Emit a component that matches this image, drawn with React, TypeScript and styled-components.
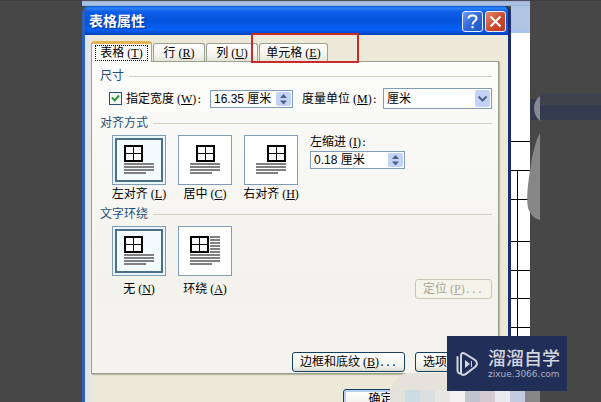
import React from "react";
import styled, { createGlobalStyle, css } from "styled-components";

const Global = createGlobalStyle`
  *, *::before, *::after { box-sizing: border-box; }
  body { margin: 0; background: #474747; }
  body, button, input, select {
    font-family: "Liberation Sans", "Noto Sans CJK SC", sans-serif;
    font-size: 12px;
    line-height: 14px;
    color: #000;
  }
`;

const Page = styled.div`
  position: relative;
  display: grid;
  grid-template-columns: 82px minmax(0, 1fr) 71px;
  height: 100vh;
  overflow: hidden;
`;

const Side = styled.div`
  background: #474747;
  border-top: 1px solid #3d3e41;
`;

const SideShapes = styled.svg`
  position: absolute;
  top: 80px;
  right: 0;
  width: 76px;
  height: 180px;
`;

const Screen = styled.div`
  display: grid;
  grid-template-columns: minmax(0, 1fr) 19px;
  grid-template-rows: 6px minmax(0, 1fr);
`;

const TopStrip = styled.div`
  grid-column: 1 / -1;
  border-top: 1px solid #4c5263;
  background: linear-gradient(#9db2d0, #b4c8e6 60%, #88aee0);
`;

const Dialog = styled.section`
  display: flex;
  flex-direction: column;
  border: solid;
  border-width: 0 3px 0 3px;
  border-color: #0a3fc0 #1c2b74 #0a3fc0 #2c5fb8;
  border-radius: 7px 7px 0 0;
  background: #2c5fb8;
  overflow: hidden;
`;

const TitleBar = styled.header`
  display: flex;
  align-items: center;
  gap: 2px;
  height: 29px;
  margin: 0 -3px;
  padding: 1px 5px 0 7px;
  flex: none;
  background: linear-gradient(#0a4fd0 0, #2f83f5 2px, #0c5ce6 6px, #0454dc 15px, #0760f6 24px, #0552de 26px, #0340b8 29px);
`;

const Title = styled.h1`
  flex: 1;
  margin: 0;
  font-size: 14px;
  line-height: 20px;
  font-weight: 700;
  color: #fff;
  text-shadow: 1px 1px 1px #08308c;
`;

const TitleButton = styled.button<{ $tone: "blue" | "red" }>`
  display: grid;
  place-items: center;
  width: 21px;
  height: 21px;
  padding: 0;
  border: 1px solid #e8effc;
  border-radius: 3px;
  background: ${(p) =>
    p.$tone === "red"
      ? "linear-gradient(135deg, #e5896f, #cc4a2c 55%, #b83a20)"
      : "linear-gradient(135deg, #6a9af0, #2f66d8 55%, #2256c4)"};
`;

const DialogBody = styled.div`
  flex: 1;
  padding: 6px 9px 0 6px;
  background: linear-gradient(90deg, #dbe5f4 0, #e9e7dc 6px, #ece9d8 20px);
`;

const Tabs = styled.div`
  display: flex;
  align-items: flex-end;
  gap: 1px;
  height: 20px;
`;

const TabSlot = styled.div`
  position: relative;
`;

const Tab = styled.button<{ $active?: boolean; $width: number }>`
  display: block;
  width: ${(p) => p.$width}px;
  height: 18px;
  padding: 1px 0 0;
  border: 1px solid #9da394;
  border-bottom: 0;
  border-radius: 3px 3px 0 0;
  background: linear-gradient(#fff, #f3f2ea 70%, #e6e4d8);
  white-space: nowrap;
  ${(p) =>
    p.$active &&
    css`
      position: relative;
      height: 21px;
      margin-bottom: -1px;
      padding: 0 3px;
      border-top: 3px solid #e3b458;
      background: #fcfcfb;
    `}
`;

const FocusRing = styled.span`
  display: block;
  border: 1px dotted #000;
`;

const Highlight = styled.div`
  position: absolute;
  top: -10px;
  left: -8px;
  width: 108px;
  height: 30px;
  border: 2px solid #c62a2a;
  pointer-events: none;
`;

const Pane = styled.div`
  display: flex;
  flex-direction: column;
  padding: 7px 6px 1px 8px;
  border: 1px solid #98a08c;
  box-shadow: 1px 1px 1px #bdbaa8;
  background: linear-gradient(#fcfcfb, #f3f2ed 70%, #f4f3ee);
`;

const Group = styled.fieldset`
  min-width: 0;
  margin: 0 0 6px;
  padding: 0;
  border: 0;
`;

const Legend = styled.legend`
  display: flex;
  align-items: center;
  gap: 5px;
  width: 100%;
  margin-bottom: 5px;
  padding: 0;
  color: #1f4f7c;
  &::after {
    content: "";
    flex: 1;
    height: 1px;
    background: #d0cfc2;
  }
`;

const SizeRow = styled.div`
  display: grid;
  grid-template-columns: 92px 83px 72px minmax(0, 1fr);
  align-items: center;
  gap: 9px;
  padding: 0 0 1px 9px;
`;

const Key = styled.span`
  margin-left: 3px;
  font-family: "Liberation Serif", serif;
  font-size: 12px;
  line-height: 12px;
`;

const Tail = styled.span`
  font-family: "DejaVu Sans Mono", monospace;
  font-size: 10px;
  line-height: 12px;
`;

const CheckLabel = styled.label`
  display: flex;
  align-items: center;
  gap: 4px;
  white-space: nowrap;
`;

const CheckBox = styled.input`
  appearance: none;
  flex: none;
  width: 13px;
  height: 13px;
  margin: 0;
  border: 1px solid #1c5180;
  background: #f4f8f4
    url("data:image/svg+xml,%3Csvg xmlns='http://www.w3.org/2000/svg' viewBox='0 0 11 11'%3E%3Cpath d='M2 4.500l2.700 3L9 2.500' fill='none' stroke='%23319a41' stroke-width='2'/%3E%3C/svg%3E");
`;

const FieldLabel = styled.label`
  white-space: nowrap;
`;

const SpinBox = styled.div`
  display: flex;
  height: 18px;
  padding: 1px;
  border: 1px solid #7f9db9;
  background: #fff;
`;

const SpinInput = styled.input`
  flex: 1;
  min-width: 0;
  padding: 0 2px;
  border: 0;
  outline: 0;
  background: none;
`;

const SpinArrows = styled.svg`
  flex: none;
  width: 15px;
  height: 14px;
  border-radius: 2px;
  background: #c3d3f7;
`;

const SelectBox = styled.div`
  display: grid;
  grid-template-columns: minmax(0, 1fr) 17px;
  height: 21px;
  padding: 1px;
  border: 1px solid #7f9db9;
  background: #fff;
`;

const UnitSelect = styled.select`
  grid-area: 1 / 1 / 2 / 3;
  appearance: none;
  padding: 0 2px;
  border: 0;
  background: none;
`;

const SelectArrow = styled.svg`
  grid-area: 1 / 2 / 2 / 3;
  width: 15px;
  height: 17px;
  justify-self: end;
  border-radius: 2px;
  background: #c3d3f7;
  pointer-events: none;
`;

const Options = styled.div`
  display: flex;
  align-items: flex-start;
  gap: 12px;
  padding-left: 12px;
`;

const Option = styled.label<{ $space: number }>`
  display: flex;
  flex-direction: column;
  align-items: center;
  gap: ${(p) => p.$space}px;
  width: 54px;
  white-space: nowrap;
`;

const HiddenRadio = styled.input`
  position: absolute;
  opacity: 0;
  pointer-events: none;
`;

const Thumb = styled.svg<{ $selected: boolean }>`
  width: 54px;
  height: 50px;
  border: 1px solid #7f9db9;
  background: #fff;
  ${(p) =>
    p.$selected &&
    css`
      background: #f4fbfd;
      box-shadow: inset 0 0 0 2px #eaf6fb, inset 0 0 0 4px #4b7088;
    `}
`;

const Indent = styled.div`
  display: flex;
  flex-direction: column;
  gap: 2px;
  width: 95px;
`;

const ButtonRow = styled.div`
  display: flex;
  justify-content: flex-end;
  gap: 10px;
`;

const WrapFooter = styled(ButtonRow)`
  margin-top: -17px;
`;

const PaneFooter = styled(ButtonRow)`
  margin-top: 47px;
`;

const PushButton = styled.button<{ $width: number; $primary?: boolean }>`
  width: ${(p) => p.$width}px;
  height: 20px;
  padding: 0 7px;
  border: 1px solid #12405f;
  border-radius: 3px;
  background: linear-gradient(#fff, #f2f1ec 75%, #dcd8cc);
  text-align: left;
  white-space: nowrap;
  ${(p) =>
    p.$primary &&
    css`
      text-align: center;
      box-shadow: inset 0 0 0 2px #bcd0f0;
    `}
  &:disabled {
    border-color: #c9c7ba;
    background: #f5f4ea;
    color: #a8a698;
  }
`;

const DialogFooter = styled.footer`
  display: flex;
  justify-content: flex-end;
  padding: 15px 81px 0 0;
`;

const Document = styled.div`
  display: flex;
  flex-direction: column;
  background: #fff;
`;

const Ribbon = styled.div`
  flex: none;
  height: 27px;
  margin-bottom: 108px;
  border-bottom: 4px solid #a8c4ee;
  background: #b0c4e4;
`;

const DocCell = styled.div<{ $height: number; $split?: boolean }>`
  flex: none;
  height: ${(p) => p.$height}px;
  padding-left: 6px;
  border-top: 1px solid #000;
  &::before {
    content: "";
    display: ${(p) => (p.$split ? "block" : "none")};
    width: 1px;
    height: 100%;
    background: #000;
  }
`;

const Mosaic = styled.svg`
  position: absolute;
  right: 61px;
  bottom: 0;
  width: 150px;
  height: 30px;
`;

const Watermark = styled.div`
  position: absolute;
  right: 34px;
  bottom: 11px;
  display: flex;
  align-items: center;
  gap: 9px;
  width: 120px;
  height: 55px;
  padding-left: 8px;
  background: #212f58;
  color: #d3d6df;
`;

const WatermarkText = styled.div`
  display: flex;
  flex-direction: column;
`;

const WatermarkName = styled.span`
  font-family: "Noto Sans CJK SC", sans-serif;
  font-size: 18px;
  line-height: 20px;
  font-weight: 500;
`;

const WatermarkSite = styled.span`
  font-family: "DejaVu Sans", sans-serif;
  font-size: 9px;
  line-height: 14px;
  color: #aab0c2;
`;

const Mnemonic = ({ k, tail }: { k: string; tail?: string }) => (
  <>
    <Key>
      (<u>{k}</u>)
    </Key>
    {tail && <Tail>{tail}</Tail>}
  </>
);

const Spinner = ({ id, name, value }: { id: string; name: string; value: string }) => (
  <SpinBox>
    <SpinInput id={id} type="text" aria-label={name} defaultValue={value} />
    <SpinArrows viewBox="0 0 15 14" aria-hidden="true">
      <path d="M4 6l3.500-4L11 6zM4 8.500l3.500 4 3.500-4z" fill="#4d6185" />
    </SpinArrows>
  </SpinBox>
);

interface ThumbOptionProps {
  group: string;
  text: string;
  k: string;
  offset?: number;
  selected?: boolean;
  around?: boolean;
  space?: number;
}

const ThumbOption = ({ group, text, k, offset = 0, selected = false, around = false, space = 2 }: ThumbOptionProps) => (
  <Option $space={space}>
    <HiddenRadio type="radio" name={group} defaultChecked={selected} />
    <Thumb viewBox="1 1 52 48" $selected={selected} aria-hidden="true" shapeRendering="crispEdges">
      <g transform={`translate(${12 + offset} 10)`}>
        <rect x="1" y="1" width="17" height="15" fill="#fff" stroke="#000" strokeWidth="2" />
        <path d="M9.500 1v15M1 8.500h17" stroke="#000" />
      </g>
      {[28, 31, 34, 37].map((y) => (
        <rect key={y} x="12" y={y} width={y === 37 ? 22 : 30} height="2" fill="#808080" />
      ))}
      {around && [10, 13, 16, 19, 22, 25].map((y) => <rect key={y} x="32" y={y} width="10" height="2" fill="#808080" />)}
    </Thumb>
    <span>
      {text}
      <Mnemonic k={k} />
    </span>
  </Option>
);

const mosaicColors = ["#e2e1da", "#cddbe3", "#dcdfe0", "#e8e6e2", "#f1eff0", "#c3c4cd", "#d0ccd0", "#e9eaf0", "#c3cbdf", "#868686"];

export default function App() {
  return (
    <>
      <Global />
      <Page>
        <Side />
        <Screen>
          <TopStrip />
          <Dialog aria-labelledby="dialog-title">
            <TitleBar>
              <Title id="dialog-title">表格属性</Title>
              <TitleButton $tone="blue" aria-label="帮助">
                <svg width="15" height="17" viewBox="0 0 15 17" aria-hidden="true">
                  <path d="M3.500 5.500C3.500 1.500 11.500 1.500 11.500 5.500C11.500 8 7.500 8 7.500 11.500M7.500 13v2.300" fill="none" stroke="#fff" strokeWidth="2" />
                </svg>
              </TitleButton>
              <TitleButton $tone="red" aria-label="关闭">
                <svg width="15" height="15" viewBox="0 0 15 15" aria-hidden="true">
                  <path d="M2.500 2.500l10 10M12.500 2.500l-10 10" stroke="#fff" strokeWidth="2" />
                </svg>
              </TitleButton>
            </TitleBar>
            <DialogBody>
              <Tabs role="tablist">
                <Tab role="tab" aria-selected="true" $active $width={61}>
                  <FocusRing>表格<Mnemonic k="T" /></FocusRing>
                </Tab>
                <Tab role="tab" $width={52}>行<Mnemonic k="R" /></Tab>
                <Tab role="tab" $width={52}>列<Mnemonic k="U" /></Tab>
                <TabSlot>
                  <Tab role="tab" $width={69}>单元格<Mnemonic k="E" /></Tab>
                  <Highlight />
                </TabSlot>
              </Tabs>
              <Pane role="tabpanel">
                <Group>
                  <Legend>尺寸</Legend>
                  <SizeRow>
                    <CheckLabel>
                      <CheckBox type="checkbox" defaultChecked />
                      <span>指定宽度<Mnemonic k="W" tail=":" /></span>
                    </CheckLabel>
                    <Spinner id="width" name="指定宽度" value="16.35 厘米" />
                    <FieldLabel htmlFor="unit">度量单位<Mnemonic k="M" tail=":" /></FieldLabel>
                    <SelectBox>
                      <UnitSelect id="unit" defaultValue="厘米">
                        <option>厘米</option>
                      </UnitSelect>
                      <SelectArrow viewBox="0 0 15 17" aria-hidden="true">
                        <path d="M3.500 6.500l4 4 4-4" fill="none" stroke="#4d6185" strokeWidth="2" />
                      </SelectArrow>
                    </SelectBox>
                  </SizeRow>
                </Group>
                <Group>
                  <Legend>对齐方式</Legend>
                  <Options>
                    <ThumbOption group="align" text="左对齐" k="L" selected />
                    <ThumbOption group="align" text="居中" k="C" offset={6} />
                    <ThumbOption group="align" text="右对齐" k="H" offset={11} />
                    <Indent>
                      <FieldLabel htmlFor="indent">左缩进<Mnemonic k="I" tail=":" /></FieldLabel>
                      <Spinner id="indent" name="左缩进" value="0.18 厘米" />
                    </Indent>
                  </Options>
                </Group>
                <Group>
                  <Legend>文字环绕</Legend>
                  <Options>
                    <ThumbOption group="wrap" text="无" k="N" space={6} selected />
                    <ThumbOption group="wrap" text="环绕" k="A" space={6} around />
                  </Options>
                  <WrapFooter>
                    <PushButton $width={77} disabled>定位<Mnemonic k="P" tail="..." /></PushButton>
                  </WrapFooter>
                </Group>
                <PaneFooter>
                  <PushButton $width={113}>边框和底纹<Mnemonic k="B" tail="..." /></PushButton>
                  <PushButton $width={77}>选项</PushButton>
                </PaneFooter>
              </Pane>
              <DialogFooter>
                <PushButton $width={75} $primary>确定</PushButton>
              </DialogFooter>
            </DialogBody>
          </Dialog>
          <Document>
            <Ribbon />
            <DocCell $height={29} />
            <DocCell $height={29} $split />
            <DocCell $height={42} $split />
            <DocCell $height={29} $split />
            <DocCell $height={28} $split />
            <DocCell $height={29} $split />
            <DocCell $height={75} $split />
          </Document>
        </Screen>
        <Side />
        <SideShapes viewBox="0 0 76 180" aria-hidden="true">
          <path d="M5 19H76V40H5z" fill="#333b4d" />
          <path d="M15 13H76V25H15z" fill="#3d424d" />
          <path d="M15 16C7 22 7 34 15 41z" fill="#848b94" />
          <path d="M15 53C10 62 7 76 5 90C3 104 1 118 3 128C6 136 10 139 15 140z" fill="#868686" />
        </SideShapes>
        <Mosaic viewBox="0 0 150 30" aria-hidden="true">
          <path d="M0 30V17C5 12 8 1 18 1H60V18H150V30z" fill="#e4e2da" />
          {mosaicColors.map((c, i) => (
            <rect key={i} x={i * 15} y="18" width="15" height="12" fill={c} />
          ))}
        </Mosaic>
        <Watermark>
          <svg width="24" height="26" viewBox="0 0 24 26" fill="none" aria-hidden="true">
            <path d="M6 22.500C4 23 2.500 21.500 2.500 19V6" stroke="#d3d6df" strokeWidth="2" strokeLinecap="round" />
            <path d="M6 5Q6 1 9.500 2.500L20 9Q24 12.500 20 16L10 23.500Q6 25 6 21z" stroke="#d3d6df" strokeWidth="2" />
            <path d="M10 9v8l5-4z" fill="#d3d6df" />
            <path d="M16.500 10v6" stroke="#d3d6df" />
          </svg>
          <WatermarkText>
            <WatermarkName>溜溜自学</WatermarkName>
            <WatermarkSite>zixue.3066.com</WatermarkSite>
          </WatermarkText>
        </Watermark>
      </Page>
    </>
  );
}
